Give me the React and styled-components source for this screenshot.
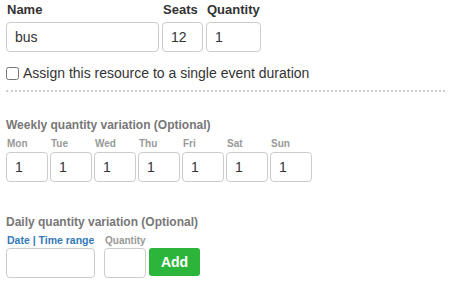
import React from "react";
import styled, { createGlobalStyle } from "styled-components";

const Global = createGlobalStyle`
  body {
    margin: 0;
    background: #fff;
    font-family: "Liberation Sans", Arial, sans-serif;
    color: #333;
  }
`;

const Form = styled.div`
  padding: 2px 6px 0 6px;
  width: 439px;
`;

const Row = styled.div`
  display: flex;
  gap: ${(p) => p.$gap ?? 3}px;
  align-items: flex-start;
`;

const Field = styled.div`
  display: flex;
  flex-direction: column;
  width: ${(p) => (p.$w ? `${p.$w}px` : "auto")};
  margin-right: ${(p) => p.$mr || 0}px;
`;

// labels of the top row
const FieldLabel = styled.label`
  font-size: 13px;
  font-weight: bold;
  line-height: 16px;
  color: #333;
  margin: 0 0 4px 1px;
`;

// tiny labels above day / quantity inputs
const SmallLabel = styled.label`
  font-size: ${(p) => (p.$link ? "10.5px" : "10px")};
  font-weight: bold;
  line-height: ${(p) => p.$lh || 12}px;
  color: ${(p) => (p.$link ? "#337ab7" : "#999")};
  margin: 0 0 ${(p) => p.$mb ?? 2}px 1px;
  white-space: nowrap;
`;

const TextInput = styled.input`
  box-sizing: border-box;
  width: ${(p) => p.$w}px;
  height: 30px;
  border: 1px solid #ccc;
  border-radius: 4px;
  padding: 0 8px;
  font-family: "Liberation Sans", Arial, sans-serif;
  font-size: 14px;
  color: #333;
  background: #fff;
  outline: none;
`;

const CheckRow = styled.label`
  display: flex;
  align-items: center;
  height: 20px;
  margin-top: 11px;
  font-size: 14px;
  color: #333;

  input {
    width: 13px;
    height: 13px;
    margin: 0 4px 0 0;
  }
`;

const Divider = styled.div`
  margin-top: 7px;
  border-top: 2px dotted #ccc;
`;

const SectionTitle = styled.div`
  font-size: 12px;
  font-weight: bold;
  line-height: 14px;
  color: #777;
  margin-top: ${(p) => p.$mt}px;
  margin-bottom: ${(p) => p.$mb}px;
`;

const AddButton = styled.button`
  width: 51px;
  height: 28px;
  border: none;
  border-radius: 3px;
  background: #2cb53b;
  color: #fff;
  font-family: "Liberation Sans", Arial, sans-serif;
  font-size: 14px;
  font-weight: bold;
  cursor: pointer;
`;

const days = ["Mon", "Tue", "Wed", "Thu", "Fri", "Sat", "Sun"];

export default function App() {
  return (
    <>
      <Global />
      <Form>
        <Row>
          <Field>
            <FieldLabel>Name</FieldLabel>
            <TextInput $w={153} defaultValue="bus" />
          </Field>
          <Field>
            <FieldLabel>Seats</FieldLabel>
            <TextInput $w={41} defaultValue="12" />
          </Field>
          <Field>
            <FieldLabel>Quantity</FieldLabel>
            <TextInput $w={55} defaultValue="1" />
          </Field>
        </Row>

        <CheckRow>
          <input type="checkbox" />
          Assign this resource to a single event duration
        </CheckRow>

        <Divider />

        <SectionTitle $mt={26} $mb={6}>
          Weekly quantity variation (Optional)
        </SectionTitle>
        <Row $gap={2}>
          {days.map((d) => (
            <Field key={d}>
              <SmallLabel>{d}</SmallLabel>
              <TextInput $w={42} defaultValue="1" />
            </Field>
          ))}
        </Row>

        <SectionTitle $mt={33} $mb={5}>
          Daily quantity variation (Optional)
        </SectionTitle>
        <Row $gap={0}>
          <Field $w={89} $mr={9}>
            <SmallLabel $link $lh={13} $mb={1}>
              Date | Time range
            </SmallLabel>
            <TextInput $w={89} />
          </Field>
          <Field $w={42} $mr={3}>
            <SmallLabel $lh={13} $mb={1}>
              Quantity
            </SmallLabel>
            <TextInput $w={42} />
          </Field>
          <Field>
            <SmallLabel $lh={13} $mb={1}>&nbsp;</SmallLabel>
            <AddButton>Add</AddButton>
          </Field>
        </Row>
      </Form>
    </>
  );
}
